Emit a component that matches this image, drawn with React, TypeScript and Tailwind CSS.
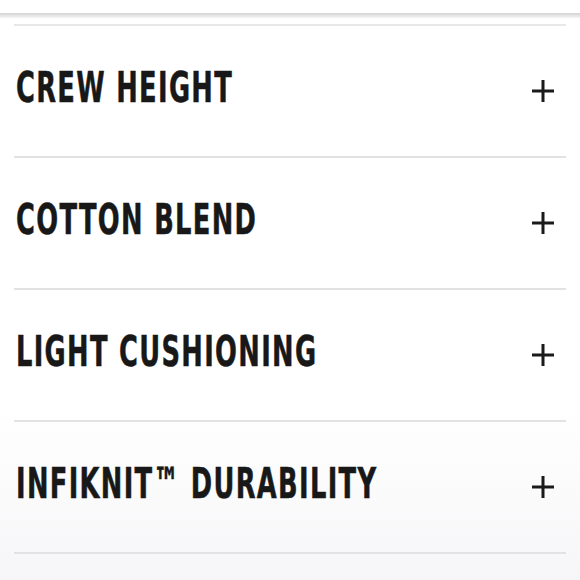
const items = ['CREW HEIGHT', 'COTTON BLEND', 'LIGHT CUSHIONING', 'INFIKNIT™ DURABILITY'];

function Plus() {
  return (
    <svg width="22" height="22" viewBox="0 0 22 22" className="shrink-0">
      <path d="M11 0v22M0 11h22" stroke="#1a1a1a" strokeWidth="3" />
    </svg>
  );
}

export default function App() {
  return (
    <div className="w-[580px] h-[580px] overflow-hidden bg-gradient-to-b from-white from-70% to-[#f6f6f8]">
      <div className="h-[13px] bg-white" />
      <div className="h-[5px] bg-gradient-to-b from-[#d4d4d4] to-[#f4f4f4]" />
      <div className="px-[14px] pt-[6px]">
        <div className="h-[2px] bg-[#e8e8e8]" />
        {items.map((t) => (
          <div key={t}>
            <div className="h-[130px] flex items-center justify-between pl-[2px] pr-[12px]">
              <span
                className="flex-1 min-w-0 whitespace-nowrap text-[43px] font-bold text-[#181818] leading-none -mt-[8px] origin-left scale-x-[0.665] tracking-[2px] [-webkit-text-stroke:0.5px_#181818]"
                style={{ fontFamily: '"DejaVu Sans Condensed", sans-serif' }}
              >
                {t}
              </span>
              <Plus />
            </div>
            <div className="h-[2px] bg-[#e2e2e4]" />
          </div>
        ))}
      </div>
    </div>
  );
}
